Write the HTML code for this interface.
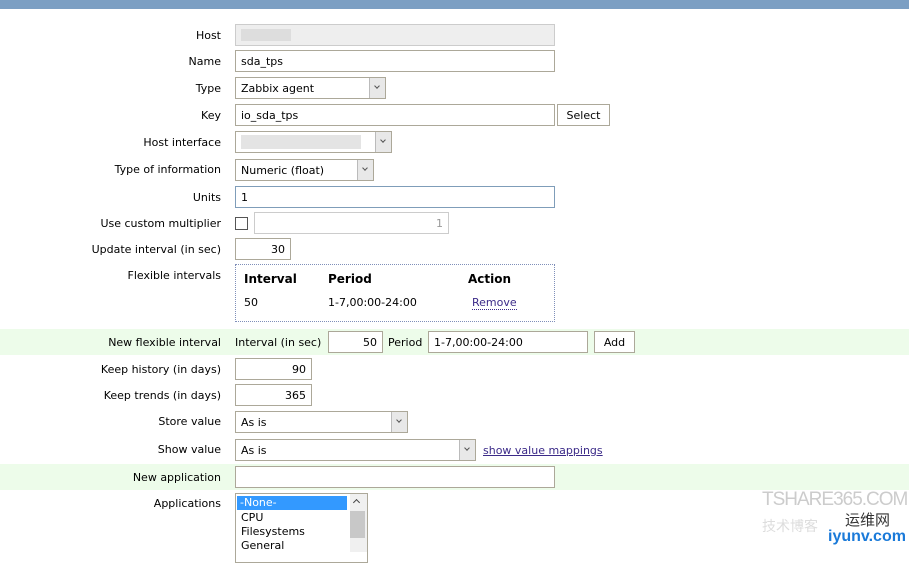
<!DOCTYPE html>
<html><head><meta charset="utf-8"><style>
body{margin:0;width:909px;height:552px;overflow:hidden;background:#fff;position:relative;font-family:"DejaVu Sans","Liberation Sans",sans-serif;font-size:11px;color:#000}
.a{position:absolute;box-sizing:border-box}
.l{position:absolute;right:688px;text-align:right;white-space:nowrap}
.i{position:absolute;box-sizing:border-box;border:1px solid #aca899;background:#fff;padding:0 5px;line-height:21px;white-space:nowrap;overflow:hidden}
.r{text-align:right}
.s:after{content:"";position:absolute;right:0;top:0;width:16px;height:100%;background:#e8e8e8;border-left:1px solid #bbb;box-sizing:border-box}
.s:before{content:"";position:absolute;right:6px;top:6px;width:3px;height:3px;border-right:1.5px solid #555;border-bottom:1.5px solid #555;transform:rotate(45deg);z-index:2}
.g{position:absolute;left:0;width:909px;background:#edfcea}
</style></head><body>
<div class="a" style="left:0;top:0;width:909px;height:9px;background:#7c9fc3"></div>
<div class="g" style="top:329px;height:26px"></div>
<div class="g" style="top:464px;height:26px"></div>

<div class="l" style="top:29px">Host</div>
<div class="i" style="left:235px;top:24px;width:320px;height:22px;background:#eee;border-color:#ccc"><span style="display:inline-block;width:50px;height:12px;background:#ddd;margin-top:4px;vertical-align:top"></span></div>
<div class="l" style="top:55px">Name</div>
<div class="i" style="left:235px;top:50px;width:320px;height:22px">sda_tps</div>
<div class="l" style="top:82px">Type</div>
<div class="i s" style="left:235px;top:77px;width:151px;height:22px">Zabbix agent</div>
<div class="l" style="top:109px">Key</div>
<div class="i" style="left:235px;top:104px;width:320px;height:22px">io_sda_tps</div>
<div class="i" style="left:557px;top:104px;width:53px;height:22px;text-align:center;padding:0">Select</div>
<div class="l" style="top:136px">Host interface</div>
<div class="i s" style="left:235px;top:131px;width:157px;height:22px"><span style="display:inline-block;width:120px;height:14px;background:#e4e4e4;margin-top:3px;vertical-align:top"></span></div>
<div class="l" style="top:163px">Type of information</div>
<div class="i s" style="left:235px;top:159px;width:139px;height:22px">Numeric (float)</div>
<div class="l" style="top:191px">Units</div>
<div class="i" style="left:235px;top:186px;width:320px;height:22px;border-color:#7f9db9">1</div>
<div class="l" style="top:217px">Use custom multiplier</div>
<div class="a" style="left:235px;top:217px;width:13px;height:13px;border:1px solid #555;background:#fff"></div>
<div class="i r" style="left:254px;top:212px;width:195px;height:22px;border-color:#ccc;color:#999">1</div>
<div class="l" style="top:243px">Update interval (in sec)</div>
<div class="i r" style="left:235px;top:238px;width:56px;height:22px">30</div>
<div class="l" style="top:269px">Flexible intervals</div>
<div class="a" style="left:235px;top:264px;width:320px;height:58px;border:1px dotted #7f8fb9"></div>
<div class="a" style="left:244px;top:272px;font-weight:bold;font-size:12px">Interval</div>
<div class="a" style="left:328px;top:272px;font-weight:bold;font-size:12px">Period</div>
<div class="a" style="left:468px;top:272px;font-weight:bold;font-size:12px">Action</div>
<div class="a" style="left:244px;top:296px">50</div>
<div class="a" style="left:328px;top:296px">1-7,00:00-24:00</div>
<div class="a" style="left:472px;top:296px;color:#3b2a88;border-bottom:1px dotted #3b2a88">Remove</div>

<div class="l" style="top:336px">New flexible interval</div>
<div class="a" style="left:235px;top:336px">Interval (in sec)</div>
<div class="i r" style="left:328px;top:331px;width:55px;height:22px">50</div>
<div class="a" style="left:388px;top:336px">Period</div>
<div class="i" style="left:428px;top:331px;width:160px;height:22px">1-7,00:00-24:00</div>
<div class="i" style="left:594px;top:331px;width:41px;height:22px;text-align:center;padding:0">Add</div>

<div class="l" style="top:363px">Keep history (in days)</div>
<div class="i r" style="left:235px;top:358px;width:77px;height:22px">90</div>
<div class="l" style="top:389px">Keep trends (in days)</div>
<div class="i r" style="left:235px;top:384px;width:77px;height:22px">365</div>
<div class="l" style="top:415px">Store value</div>
<div class="i s" style="left:235px;top:411px;width:173px;height:22px">As is</div>
<div class="l" style="top:443px">Show value</div>
<div class="i s" style="left:235px;top:439px;width:241px;height:22px">As is</div>
<div class="a" style="left:483px;top:444px;color:#3b2a88;text-decoration:underline">show value mappings</div>
<div class="l" style="top:471px">New application</div>
<div class="i" style="left:235px;top:466px;width:320px;height:22px"></div>
<div class="l" style="top:497px">Applications</div>
<div class="a" style="left:235px;top:493px;width:133px;height:70px;border:1px solid #aca899;background:#fff"></div>
<div class="a" style="left:237px;top:496px;width:110px;height:14px;background:#3399ff;color:#fff;padding-left:3px;line-height:14px">-None-</div>
<div class="a" style="left:241px;top:511px">CPU</div>
<div class="a" style="left:241px;top:525px">Filesystems</div>
<div class="a" style="left:241px;top:539px">General</div>
<div class="a" style="left:350px;top:494px;width:17px;height:58px;background:#f0f0f0"></div>
<div class="a" style="left:350px;top:511px;width:15px;height:27px;background:#c8c8c8"></div>
<div class="a" style="left:354px;top:500px;width:5px;height:5px;border-left:1.5px solid #444;border-top:1.5px solid #444;transform:rotate(45deg)"></div>

<div class="a" style="left:762px;top:489px;font-size:19px;color:#ccc;font-family:'Liberation Sans',sans-serif;letter-spacing:-1px">TSHARE365.COM</div>
<div class="a" style="left:762px;top:516px;font-size:14px;color:#ddd;font-family:'Noto Sans CJK SC',sans-serif">技术博客</div>
<div class="a" style="left:845px;top:509px;font-size:15px;color:#333;font-family:'Liberation Sans','Noto Sans CJK SC',sans-serif">运维网</div>
<div class="a" style="left:828px;top:528px;font-size:16px;font-weight:bold;color:#1a7ad9;font-family:'Liberation Sans',sans-serif">iyunv.com</div>
</body></html>
